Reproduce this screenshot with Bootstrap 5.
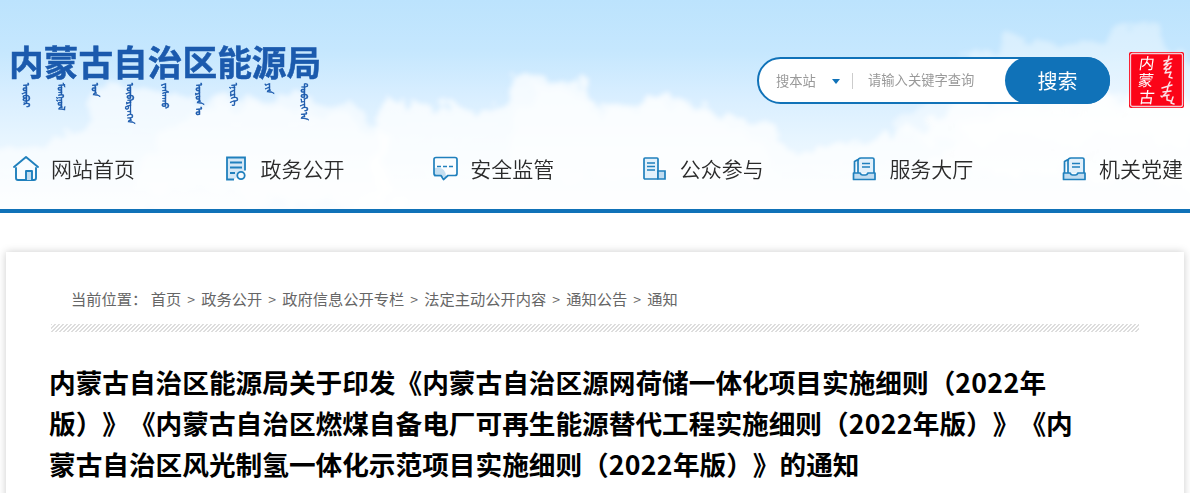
<!DOCTYPE html>
<html lang="zh-CN">
<head>
<meta charset="utf-8">
<meta name="viewport" content="width=device-width, initial-scale=1">
<title>内蒙古自治区能源局</title>
<link href="https://cdn.jsdelivr.net/npm/bootstrap@5.3.0/dist/css/bootstrap.min.css" rel="stylesheet">
<style>
:root{--brand:#1072b8}
body{font-family:"Noto Sans CJK SC",sans-serif;overflow:hidden;background:#fff;text-spacing-trim:space-all}
.site-head{height:213px;border-bottom:4px solid var(--brand);background:linear-gradient(#bce3fd 0,#c5e7fe 50px,#d8eeff 95px,#e9f6ff 145px,#fbfdff 209px)}
.sky{position:absolute;inset:0;z-index:0}
.head-top{height:145px;padding:38px 6px 0 9px}
.site-name{font-size:34.7px;line-height:46px;font-weight:700;color:#1b5aad;white-space:nowrap;-webkit-text-stroke:.5px #1b5aad}
.mongol{display:grid;grid-template-columns:repeat(9,34.7px);margin-top:-1px;color:#1b5aad}
.mongol span{writing-mode:vertical-lr;font-size:9.4px;line-height:14px;height:50px;margin-left:11px;white-space:nowrap;-webkit-text-stroke:.5px #1b5aad}
.search-box{width:353px;height:47px;margin-top:19px;border:2px solid var(--brand);border-radius:24px;background:#fff}
.scope{padding-left:17px;width:94px;font-size:13.3px;color:#999;border-right:1px solid #ccc;height:16px;margin-top:1px}
.query{font-size:13.3px;color:#999;padding-left:15px;margin-top:-2px}
.go{width:105px;height:47px;margin:-2px;border-radius:24px;background:var(--brand);font-size:20px;color:#fff}
.seal{width:55px;height:56px;margin:14px 0 0 19px}
.main-nav{height:50px;margin-top:-1px;padding-left:13px;display:grid;grid-template-columns:repeat(5,209.6px) 1fr}
.main-nav a{font-size:21px;font-weight:350;color:#2b2b2b;text-decoration:none;white-space:nowrap}
.main-nav svg{width:26px;height:26px;margin:-3px 12px 0 0;flex:none}
.paper{margin:39px 6px 0;height:260px;padding:0 45px;background:#fff;box-shadow:0 0 8px #ccc}
.crumbs{height:72px;padding:33px 0 0 20px;font-size:15.25px;line-height:26px;color:#666;white-space:nowrap}
.crumbs i{display:inline-block;width:20px;text-align:center;font-style:normal;font-size:14px}
.hatch{height:8px;background:repeating-linear-gradient(135deg,#ddd 0 .9px,#fff 1.2px 2.600px,#ddd 2.828px)}
.doc-title{margin:29px 0 0 -2px;font-size:26.67px;line-height:41px;font-weight:700;color:#000;white-space:nowrap}
.doc-title span{letter-spacing:.3px}
</style>
</head>
<body>
<header class="site-head position-relative">
<svg class="sky" width="1190" height="209" viewBox="0 0 1190 209">
<defs>
<filter id="puff" x="-5%" y="-15%" width="110%" height="130%"><feTurbulence type="fractalNoise" baseFrequency=".045" numOctaves="5" seed="5" result="n"/><feDisplacementMap in="SourceGraphic" in2="n" scale="36" xChannelSelector="R" yChannelSelector="G"/><feGaussianBlur stdDeviation="2.6"/></filter>
<linearGradient id="fade" x1="0" y1="0" x2="0" y2="209" gradientUnits="userSpaceOnUse"><stop offset="0" stop-color="#fff" stop-opacity=".5"/><stop offset=".45" stop-color="#fff" stop-opacity=".75"/><stop offset="1" stop-color="#fff" stop-opacity=".7"/></linearGradient>
</defs>
<g filter="url(#puff)" fill="url(#fade)">
<path d="M-20 155L40 145 85 122 105 82 140 90 180 97 230 96 280 94 310 97 345 102 368 112 380 128 400 200 -20 230z" opacity=".8"/>
<path d="M130 190L160 140 190 110 250 104 310 110 350 118 375 135 400 200z" opacity=".6"/>
<path d="M370 190L378 125 388 101 440 108 490 110 505 90 530 76 560 74 575 76 584 100 602 110 640 99 665 97 700 106 730 118 765 120 782 138 795 155 830 146 870 140 900 128 930 125 960 100 980 92 1060 100 1190 92 1220 230 320 230z"/>
<path d="M505 180L520 110 540 84 562 84 574 100 600 114 650 102 690 110 740 130 780 180z" opacity=".5"/>
<path d="M900 120L925 105 970 94 985 70 965 58 1000 46 1025 34 1060 46 1078 42 1100 42 1105 35 1130 32 1138 19 1152 18 1165 45 1175 56 1215 65 1215 140 920 140z" opacity=".6"/>
<path d="M930 170L960 130 1000 110 1080 104 1215 98 1215 190z" opacity=".8"/>
</g>
</svg>
<div class="head-top d-flex align-items-start position-relative">
<div class="me-auto"><div class="site-name">内蒙古自治区能源局</div>
<div class="mongol" lang="mn"><span>ᠥᠪᠥᠷ</span><span>ᠮᠣᠩᠭᠣᠯ</span><span>ᠤᠨ</span><span>ᠥᠪᠡᠷᠲᠡᠭᠡᠨ</span><span>ᠵᠠᠰᠠᠬᠤ</span><span>ᠣᠷᠣᠨ ᠤ</span><span>ᠡᠨᠧᠷᠭᠢ</span><span>ᠶᠢᠨ</span><span>ᠲᠣᠪᠴᠢᠶ᠎ᠠ</span></div></div>
<form class="search-box d-flex align-items-center">
<div class="scope d-flex align-items-center">搜本站<svg class="ms-3" width="8" height="5"><path d="M0 0h8L4 5z" fill="#1072b8"/></svg></div>
<div class="query me-auto">请输入关键字查询</div>
<button type="button" class="btn go p-0 border-0">搜索</button>
</form>
<svg class="seal" viewBox="0 0 55 56"><rect width="55" height="56" rx="2" fill="#fb0418"/><rect x="1.500" y="1.500" width="52" height="53" rx="2" fill="none" stroke="#f6c9d3" stroke-width="1.300"/>
<g fill="#fff" font-family="'Noto Sans CJK SC',sans-serif" font-size="15.500" text-anchor="middle"><text transform="translate(17 17) skewX(-8)">内</text><text transform="translate(16 34) skewX(-8)">蒙</text><text transform="translate(17 51) skewX(-8)">古</text></g>
<g fill="none" stroke="#fbe3e8" stroke-width="1.500" stroke-linecap="round" stroke-linejoin="round"><path d="M40 4l-1 5M35 9l8-2M39 9l-4 4 7-2M39 13l-4 4 5 0 2-3M38 17l-2 4 6-1-2 5 3 1M41 30l-2 4M33 36l10-3M39 35l-1 4M34 40l8-1M38 40l-4 4 6-1M38 44l0 4 4 1M32 44l1 1M44 45l-2 6 3 1"/></g></svg>
</div>
<nav class="main-nav position-relative">
<a href="#" class="d-flex align-items-center"><svg viewBox="0 0 26 26" fill="none" stroke="#2080bd" stroke-width="1.900" stroke-linejoin="round" stroke-linecap="round"><path d="M1 12L13 2l12 10"/><path d="M3 13v10q0 2 2 2h16q2 0 2-2V13"/><path d="M13 25v-9h6v9" fill="#c1dcf0"/></svg>网站首页</a>
<a href="#" class="d-flex align-items-center"><svg viewBox="0 0 26 26" fill="none" stroke="#2080bd" stroke-width="1.800"><path d="M11 24.500H4V2.500h18v13" fill="#d5e8f6"/><path d="M7 7.500h12M7 12.500h12M7 18h5"/><circle cx="18" cy="20.500" r="3.700" fill="#f8fcff"/></svg>政务公开</a>
<a href="#" class="d-flex align-items-center"><svg viewBox="0 0 26 26" fill="none" stroke="#2080bd" stroke-width="1.700" stroke-linejoin="round"><path d="M2 13q12-2 12 9H2z" fill="#c5dff1" stroke="none"/><path d="M9 20.500H4q-2 0-2-2v-14q0-2 2-2h19q2 0 2 2v14q0 2-2 2h-7l-4.500 4z"/><path d="M5 11.500h17" stroke-dasharray="4 2"/></svg>安全监管</a>
<a href="#" class="d-flex align-items-center"><svg viewBox="0 0 26 26" fill="none" stroke="#2080bd" stroke-width="1.700"><rect x="2" y="3" width="14" height="21" rx="1" fill="#e3f1fb"/><path d="M5 8h8M5 11.500h8M5 15h8"/><path d="M16 16h7v8h-7z" fill="#c1dcf0"/></svg>公众参与</a>
<a href="#" class="d-flex align-items-center"><svg viewBox="0 0 26 26" fill="none" stroke="#2080bd" stroke-width="1.700" stroke-linejoin="round"><path d="M7 4.500L3.500 6.500v12M7 18V6q0-3 3-3h11.500q1.500 0 1.500 1.500v14" fill="#e3f1fb"/><path d="M2.500 18H9q1 2 2.500 2h3q1.500 0 2.500-2h7v6.500H2.500z" fill="#c1dcf0"/><path d="M11 8.500h8M11 12h8"/></svg>服务大厅</a>
<a href="#" class="d-flex align-items-center"><svg viewBox="0 0 26 26" fill="none" stroke="#2080bd" stroke-width="1.700" stroke-linejoin="round"><path d="M7 4.500L3.500 6.500v12M7 18V6q0-3 3-3h11.500q1.500 0 1.500 1.500v14" fill="#e3f1fb"/><path d="M2.500 18H9q1 2 2.500 2h3q1.500 0 2.500-2h7v6.500H2.500z" fill="#c1dcf0"/><path d="M11 8.500h8M11 12h8"/></svg>机关党建</a>
</nav>
</header>
<main class="paper">
<nav class="crumbs">当前位置： 首页<i>&gt;</i>政务公开<i>&gt;</i>政府信息公开专栏<i>&gt;</i>法定主动公开内容<i>&gt;</i>通知公告<i>&gt;</i>通知</nav>
<div class="hatch"></div>
<h1 class="doc-title">内蒙古自治区能源局关于印发《内蒙古自治区源网荷储一体化项目实施细则（<span>2022</span>年<br>版）》《内蒙古自治区燃煤自备电厂可再生能源替代工程实施细则（<span>2022</span>年版）》《内<br>蒙古自治区风光制氢一体化示范项目实施细则（<span>2022</span>年版）》的通知</h1>
</main>
<script src="https://cdn.jsdelivr.net/npm/bootstrap@5.3.0/dist/js/bootstrap.bundle.min.js"></script>
</body>
</html>
